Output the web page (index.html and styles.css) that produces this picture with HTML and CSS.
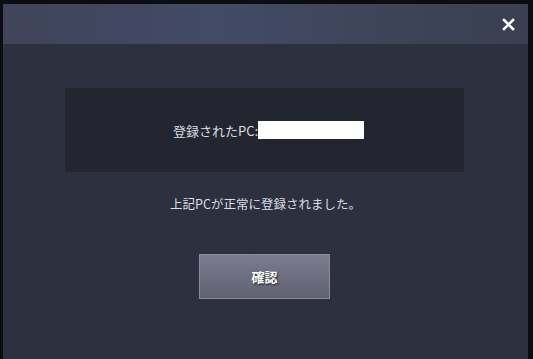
FILE: index.html
```html
<!DOCTYPE html>
<html lang="ja">
<head>
<meta charset="utf-8">
<link rel="stylesheet" href="styles.css">
</head>
<body>
<div class="dialog">
  <div class="header">
    <button class="close" aria-label="close">
      <svg width="13" height="13" viewBox="0 0 13 13"><path d="M2 2 L11 11 M11 2 L2 11" stroke="#fff" stroke-width="2.6" stroke-linecap="square"/></svg>
    </button>
  </div>
  <div class="body">
    <div class="infobox">
      <span class="label">登録されたPC:</span><span class="pcname"></span>
    </div>
    <p class="message">上記PCが正常に登録されました。</p>
    <button class="confirm">確認</button>
  </div>
</div>
</body>
</html>
```
FILE: styles.css
```css
html, body {
  margin: 0;
  padding: 0;
  background: #0c0d11;
  height: 100%;
  overflow: hidden;
}
body {
  font-family: "Noto Sans CJK JP", "Noto Sans", sans-serif;
  padding: 4px 5px 0 3px;
  box-sizing: border-box;
}
.dialog {
  background: #2d303e;
  height: 355px;
  display: flex;
  flex-direction: column;
}
.header {
  height: 40px;
  background: linear-gradient(90deg, #3f4459 0%, #434a66 40%, #3d4458 75%, #3a4051 100%);
  display: flex;
  justify-content: flex-end;
  align-items: center;
  padding-right: 13px;
  box-sizing: border-box;
}
.close {
  background: none;
  border: 0;
  padding: 0;
  width: 13px;
  height: 13px;
  display: flex;
  margin-top: 1px;
}
.body {
  display: flex;
  flex-direction: column;
  align-items: center;
  padding-top: 44px;
}
.infobox {
  width: 399px;
  height: 84px;
  background: #232530;
  display: flex;
  justify-content: center;
  align-items: center;
  margin-left: -3px;
  padding-left: 5px;
  box-sizing: border-box;
}
.label {
  color: #dcdde2;
  font-size: 13px;
  margin-left: 4px;
}
.pcname {
  display: inline-block;
  width: 106px;
  height: 18px;
  background: #ffffff;
}
.message {
  margin: 23px 0 0 0;
  color: #dcdde2;
  font-size: 12.5px;
  line-height: 18px;
}
.confirm {
  margin-top: 41px;
  margin-left: -2px;
  width: 131px;
  height: 45px;
  background: linear-gradient(180deg, #7c7d90 0%, #5f6172 100%);
  border: 1px solid #8a8c9d;
  color: #ffffff;
  font-family: "Noto Sans CJK JP", sans-serif;
  font-weight: bold;
  font-size: 13px;
  text-shadow: 1px 1px 2px rgba(0,0,0,0.7);
  box-sizing: border-box;
  padding: 0;
}
```
